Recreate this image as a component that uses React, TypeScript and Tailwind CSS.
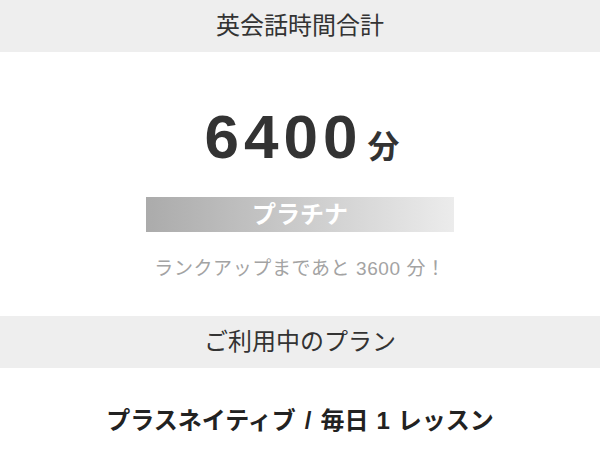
export default function App() {
  const font = { fontFamily: '"Liberation Sans", "Noto Sans CJK JP", sans-serif' };
  return (
    <div className="w-[600px] h-[450px] overflow-hidden bg-white flex flex-col" style={font}>
      <div className="h-[52px] bg-[#eeeeee] flex items-center justify-center">
        <span className="text-[24px] leading-none text-[#333333]">英会話時間合計</span>
      </div>
      <div className="h-[264px] flex flex-col items-center pt-[54px]">
        <div className="flex items-baseline text-[#333333] font-bold pl-[4px]">
          <span className="text-[62px] leading-none tracking-[5px]">6400</span>
          <span className="text-[32px] leading-none ml-[5px]">分</span>
        </div>
        <div className="mt-[29px] w-[308px] h-[35px] bg-gradient-to-r from-[#ababab] to-[#ececec] flex items-center justify-center">
          <span className="text-[24px] leading-none font-bold text-white">プラチナ</span>
        </div>
        <div className="mt-[27px] text-[19px] leading-none tracking-[0.6px] text-[#a3a3a3]">
          ランクアップまであと 3600 分！
        </div>
      </div>
      <div className="h-[52px] bg-[#eeeeee] flex items-center justify-center">
        <span className="text-[24px] leading-none text-[#333333]">ご利用中のプラン</span>
      </div>
      <div className="flex justify-center pt-[41px]">
        <span className="text-[24px] leading-none font-bold text-[#222222] flex items-baseline">
          プラスネイティブ<span className="mx-[9px]">/</span>毎日<span className="mx-[8px]">1</span>レッスン
        </span>
      </div>
    </div>
  );
}
